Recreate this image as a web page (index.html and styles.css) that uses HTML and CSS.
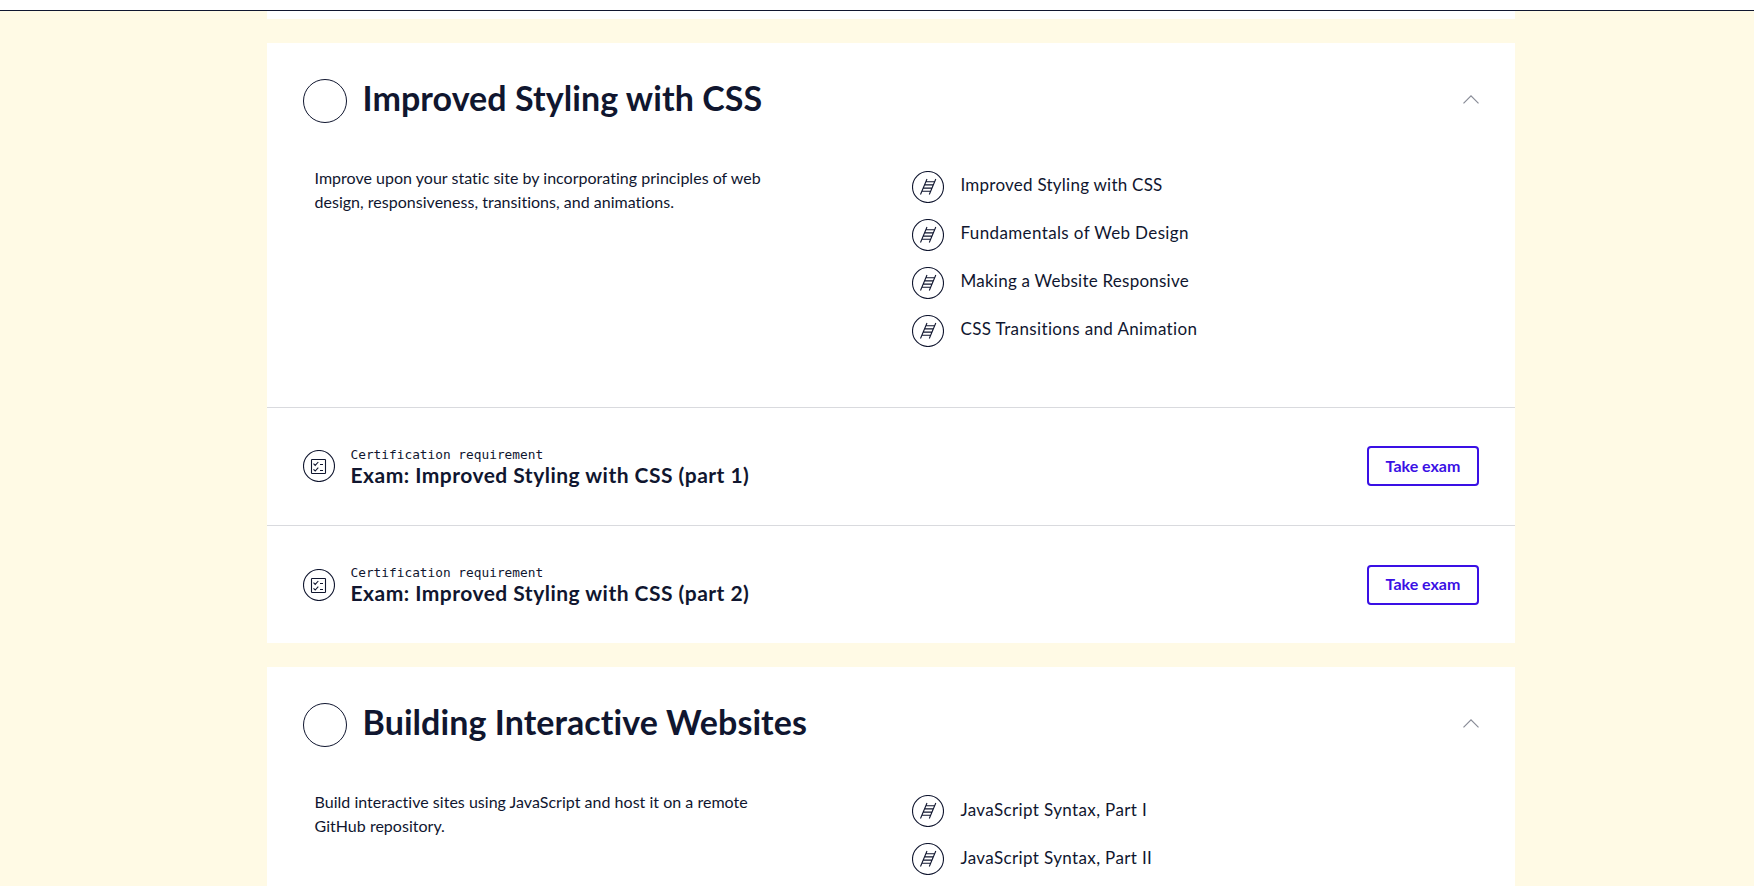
FILE: index.html
```html
<!DOCTYPE html>
<html lang="en">
<head>
<meta charset="utf-8">
<title>Syllabus</title>
<link rel="stylesheet" href="styles.css">
</head>
<body>
<svg width="0" height="0" class="defs" aria-hidden="true">
  <symbol id="ladder" viewBox="0 0 32 32">
    <circle cx="16" cy="16" r="15.5"/>
    <path d="M15 8 8.5 23.5M23.8 8 17.3 23.5M13.8 10.8h8.6M12.4 13.9h8.7M11.2 17.1h8.6M9.8 20.3h8.7"/>
  </symbol>
  <symbol id="checklist" viewBox="0 0 32 32">
    <circle cx="16" cy="16" r="15.5"/>
    <rect x="8.5" y="9.5" width="14" height="14" rx=".6"/>
    <path d="M10.5 13.7l1.7 1.7 3.1-3.4M10.5 19.3l1.7 1.7 3.1-3.4M17 14.5h3M17 20.5h3"/>
  </symbol>
  <symbol id="chevron" viewBox="0 0 16 9">
    <path d="M.5 8.4 8 .9l7.5 7.5"/>
  </symbol>
</svg>
<header class="topbar"></header>
<main class="syllabus">
  <section class="card card-previous"></section>

  <section class="card">
    <div class="card-head">
      <span class="progress"></span>
      <h2 class="title">Improved Styling with CSS</h2>
      <svg class="chevron"><use href="#chevron"/></svg>
    </div>
    <div class="card-body">
      <p class="description">Improve upon your static site by incorporating principles of web<br>design, responsiveness, transitions, and animations.</p>
      <ul class="lessons">
        <li class="lesson lesson-tight"><svg class="icon"><use href="#ladder"/></svg><span>Improved Styling with CSS</span></li>
        <li class="lesson"><svg class="icon"><use href="#ladder"/></svg><span>Fundamentals of Web Design</span></li>
        <li class="lesson lesson-tight"><svg class="icon"><use href="#ladder"/></svg><span>Making a Website Responsive</span></li>
        <li class="lesson"><svg class="icon"><use href="#ladder"/></svg><span>CSS Transitions and Animation</span></li>
      </ul>
    </div>
    <div class="exam exam-first">
      <svg class="icon"><use href="#checklist"/></svg>
      <div class="exam-text">
        <div class="eyebrow">Certification requirement</div>
        <h3 class="exam-title">Exam: Improved Styling with CSS (part 1)</h3>
      </div>
      <button class="take-exam">Take exam</button>
    </div>
    <div class="exam">
      <svg class="icon"><use href="#checklist"/></svg>
      <div class="exam-text">
        <div class="eyebrow">Certification requirement</div>
        <h3 class="exam-title">Exam: Improved Styling with CSS (part 2)</h3>
      </div>
      <button class="take-exam">Take exam</button>
    </div>
  </section>

  <section class="card card-last">
    <div class="card-head">
      <span class="progress"></span>
      <h2 class="title">Building Interactive Websites</h2>
      <svg class="chevron"><use href="#chevron"/></svg>
    </div>
    <div class="card-body">
      <p class="description">Build interactive sites using JavaScript and host it on a remote<br>GitHub repository.</p>
      <ul class="lessons">
        <li class="lesson"><svg class="icon"><use href="#ladder"/></svg><span>JavaScript Syntax, Part I</span></li>
        <li class="lesson"><svg class="icon"><use href="#ladder"/></svg><span>JavaScript Syntax, Part II</span></li>
      </ul>
    </div>
  </section>
</main>
</body>
</html>
```

FILE: styles.css
```css
* { box-sizing: border-box; }
html, body { height: 100%; }
body {
  margin: 0;
  overflow: hidden;
  background: #fffae5;
  color: #10162f;
  font-family: Lato, "Open Sans", sans-serif;
  font-variant-ligatures: none;
}
.defs { display: block; height: 0; }
.topbar { height: 11px; background: #fff; border-bottom: 1px solid #10162f; }
.syllabus {
  width: 1248px;
  margin: 0 auto 0 267px;
  display: flex;
  flex-direction: column;
  gap: 24px;
}
.card { background: #fff; }
.card-previous { height: 8px; }
.card-head {
  display: flex;
  align-items: flex-start;
  padding: 36px 36px 0;
}
.progress {
  width: 44px;
  height: 44px;
  border: 1px solid #10162f;
  border-radius: 50%;
}
.title {
  flex: 1;
  margin: 0 0 0 15.5px;
  font-size: 34px;
  line-height: 38px;
  font-weight: 700;
  letter-spacing: .07px;
}
.chevron {
  width: 16px;
  height: 9px;
  margin-top: 16px;
  fill: none;
  stroke: #888b97;
  stroke-width: 1.2;
}
.card-body {
  display: grid;
  grid-template-columns: 597.5px 1fr;
  padding: 43px 36px 60px 47.5px;
}
.card-last .card-body { padding-bottom: 11px; }
.description {
  margin: 0;
  font-size: 16px;
  line-height: 24px;
  letter-spacing: .02px;
}
.lessons {
  display: grid;
  gap: 16px;
  margin: 5px 0 0;
  padding: 0;
  list-style: none;
}
.lesson {
  display: flex;
  gap: 16.5px;
  height: 32px;
  font-size: 17px;
  line-height: 28px;
  letter-spacing: .37px;
}
.lesson-tight { letter-spacing: .24px; }
.card-last .lesson { line-height: 30px; }
.icon {
  flex: none;
  width: 32px;
  height: 32px;
  fill: none;
  stroke: #10162f;
  stroke-width: 1.1;
}
.exam {
  display: flex;
  align-items: center;
  height: 118px;
  padding: 0 36px;
  border-top: 1px solid #d9dade;
}
.exam-first .icon,
.exam-first .take-exam { margin-bottom: 1px; }
.exam-text { flex: 1; margin-left: 15.5px; }
.eyebrow {
  font: 12.8px/18px "DejaVu Sans Mono", monospace;
}
.exam-title {
  margin: -1px 0 1px;
  font-size: 21px;
  line-height: 24px;
  font-weight: 700;
  letter-spacing: .48px;
}
.take-exam {
  width: 112px;
  height: 40px;
  padding: 0 0 1px;
  border: 2px solid #3a10e5;
  border-radius: 4px;
  background: #fff;
  color: #3a10e5;
  font: 700 16px/24px Lato, sans-serif;
}
```
